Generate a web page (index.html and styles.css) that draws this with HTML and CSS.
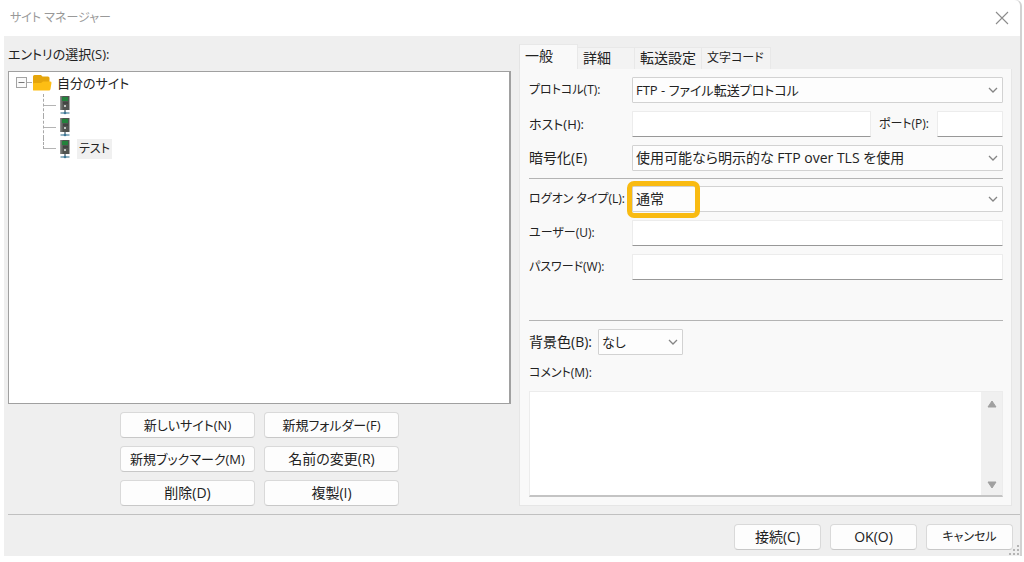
FILE: index.html
```html
<!DOCTYPE html>
<html lang="ja">
<head>
<meta charset="utf-8">
<title>サイト マネージャー</title>
<link rel="stylesheet" href="styles.css">
</head>
<body>
<svg class="defs" aria-hidden="true">
  <symbol id="chevron" viewBox="0 0 10 6"><path d="M1 1l4 4 4-4" fill="none" stroke="#858585" stroke-width="1.3"/></symbol>
  <symbol id="server" viewBox="0 0 12 20">
    <rect x="1.5" y="1" width="9" height="14" fill="#505350"/>
    <rect x="1.5" y="1" width="2" height="14" fill="#6d706d"/>
    <rect x="3" y="2" width="6" height="4" fill="#23823c"/>
    <path d="M4 8h5" stroke="#353835"/>
    <circle cx="6" cy="11" r="1" fill="#e4e8e4"/>
    <path d="M6 15v3" stroke="#667882" stroke-width="1.5"/>
    <path d="M1.5 18h9" stroke="#6e9bb0" stroke-width="1.5"/>
    <circle cx="6" cy="18" r="1.3" fill="#3d7898"/>
  </symbol>
</svg>
<div class="dialog">
  <header class="titlebar">
    <h1 class="title">サイト マネージャー</h1>
    <button class="close" aria-label="閉じる"><svg width="14" height="14" viewBox="0 0 14 14"><path d="M1 1l12 12M13 1L1 13" stroke="#8c8c8c" stroke-width="1.1"/></svg></button>
  </header>
  <main class="main">
    <section class="sites">
      <h2 class="heading" id="tree-label">エントリの選択(S):</h2>
      <div class="tree" role="tree" aria-labelledby="tree-label">
        <div class="node" role="treeitem" aria-expanded="true">
          <svg class="toggle" width="16" height="12" viewBox="0 0 16 12"><rect x=".5" y=".5" width="10" height="10" fill="#fafafa" stroke="#a3a3a3"/><path d="M2.500 5.500h6" stroke="#777"/><path d="M11 5.500h5" stroke="#aaa"/></svg>
          <svg class="folder" width="20" height="18" viewBox="0 0 20 18"><path d="M1 2.500Q1 1 2.500 1h6.500l1.500 1.500H16q1.500 0 1.500 1.500V15H1z" fill="#e5a50c"/><path d="M1 16V10q0-1 1-1h7l2-1.500h7q1.500 0 1.500 1.200L18.500 15q-.3 1.500-1.500 1.500H2q-1 0-1-.5z" fill="#fdbe14"/></svg>
          <span class="mixed">自分のサイト</span>
        </div>
        <ul class="children" role="group">
          <li class="node" role="treeitem"><svg class="server"><use href="#server"/></svg></li>
          <li class="node" role="treeitem"><svg class="server"><use href="#server"/></svg></li>
          <li class="node" role="treeitem" aria-selected="true"><svg class="server"><use href="#server"/></svg><span class="selected kana">テスト</span></li>
        </ul>
      </div>
      <div class="actions">
        <button class="btn mixed">新しいサイト(N)</button>
        <button class="btn mixed">新規フォルダー(F)</button>
        <button class="btn mixed">新規ブックマーク(M)</button>
        <button class="btn">名前の変更(R)</button>
        <button class="btn">削除(D)</button>
        <button class="btn">複製(I)</button>
      </div>
    </section>
    <section class="settings">
      <div class="tabs" role="tablist">
        <button class="tab active" role="tab" aria-selected="true">一般</button>
        <button class="tab" role="tab">詳細</button>
        <button class="tab" role="tab">転送設定</button>
        <button class="tab kana" role="tab">文字コード</button>
      </div>
      <form class="panel">
        <div class="group">
          <label class="kana" for="protocol">プロトコル(T):</label>
          <div class="select"><select class="mixed" id="protocol"><option>FTP - ファイル転送プロトコル</option></select><svg class="chevron"><use href="#chevron"/></svg></div>
          <label class="mixed" for="host">ホスト(H):</label>
          <div class="host">
            <input class="field" id="host" type="text">
            <label class="kana" for="port">ポート(P):</label>
            <input class="field port" id="port" type="text">
          </div>
          <label for="encryption">暗号化(E)</label>
          <div class="select"><select id="encryption"><option>使用可能なら明示的な FTP over TLS を使用</option></select><svg class="chevron"><use href="#chevron"/></svg></div>
        </div>
        <div class="group logon">
          <label class="kana" for="logon">ログオン タイプ(L):</label>
          <div class="select"><select id="logon"><option>通常</option></select><svg class="chevron"><use href="#chevron"/></svg><span class="highlight"></span></div>
          <label class="kana" for="user">ユーザー(U):</label>
          <input class="field" id="user" type="text">
          <label class="kana" for="password">パスワード(W):</label>
          <input class="field" id="password" type="password">
        </div>
        <div class="color">
          <label for="color">背景色(B):</label>
          <div class="select small"><select class="mixed" id="color"><option>なし</option></select><svg class="chevron"><use href="#chevron"/></svg></div>
        </div>
        <label class="comment-label kana" for="comment">コメント(M):</label>
        <div class="comment">
          <textarea id="comment"></textarea>
          <div class="scroll" aria-hidden="true">
            <svg width="10" height="8" viewBox="0 0 10 8"><path d="M5 1l4 6H1z" fill="#a0a0a0" stroke="#a0a0a0" stroke-linejoin="round"/></svg>
            <svg width="10" height="8" viewBox="0 0 10 8"><path d="M5 7l4-6H1z" fill="#a0a0a0" stroke="#a0a0a0" stroke-linejoin="round"/></svg>
          </div>
        </div>
      </form>
    </section>
  </main>
  <footer class="footer">
    <button class="btn">接続(C)</button>
    <button class="btn">OK(O)</button>
    <button class="btn kana">キャンセル</button>
    <svg class="grip" width="12" height="12" viewBox="0 0 12 12" aria-hidden="true"><path d="M9 1h2v2H9zM5 5h2v2H5zM9 5h2v2H9zM1 9h2v2H1zM5 9h2v2H5zM9 9h2v2H9z" fill="#b4b4b4"/></svg>
  </footer>
</div>
</body>
</html>
```
FILE: styles.css
```css
* { box-sizing: border-box; }

body {
  margin: 0;
  background: #fff;
  color: #222;
  font: 14px/20px "Open Sans", "Noto Sans CJK JP", sans-serif;
  font-feature-settings: "palt";
}

button, input, select, textarea {
  margin: 0;
  color: inherit;
  font: inherit;
  font-feature-settings: inherit;
}

.mixed { font-size: 13px; }
.kana { font-size: 12px; }

.defs { position: absolute; width: 0; height: 0; }

.dialog {
  margin: 0 2px 0 4px;
  border-right: 2px solid #d2d2d2;
  border-top-right-radius: 6px;
  background: #efefef;
}

.titlebar {
  display: flex;
  align-items: center;
  justify-content: space-between;
  height: 36px;
  padding: 0 11px 0 6px;
  border-top-right-radius: 6px;
  background: #fff;
}

.title { margin: 0; color: #999; font-size: 12px; font-weight: 400; }

.close { display: flex; padding: 0; border: 0; background: none; }

.main {
  display: grid;
  grid-template-columns: 503fr 493fr;
  gap: 8px;
  padding: 8px 8px 8px 4px;
}

.sites { display: flex; flex-direction: column; }

.heading { margin: 0 0 7px; font-size: 13px; font-weight: 400; }

.tree {
  flex: 1;
  padding: 0 7px;
  border: 1px solid #a0a0a0;
  border-right-width: 2px;
  background: #fff;
}

.node { display: flex; align-items: center; height: 22px; }

.folder { margin-right: 5px; }

.children {
  width: 120px;
  margin: 0 0 0 27px;
  padding: 0;
  list-style: none;
}

.children .node::before {
  content: "";
  width: 12px;
  height: 22px;
  margin-right: 3px;
  border-left: 1px dashed #a8a8a8;
  background: linear-gradient(#b4b4b4, #b4b4b4) center / 100% 1px no-repeat;
}

.children .node:last-child::before {
  height: 11px;
  align-self: flex-start;
  background-position: bottom;
}

.server { width: 12px; height: 20px; }

.selected { margin-left: 6px; padding: 0 2px; background: #f0f0f0; }

.actions {
  display: grid;
  grid-template-columns: 135px 135px;
  justify-content: center;
  gap: 8px 9px;
  margin-top: 8px;
}

.btn {
  height: 26px;
  padding: 0 4px;
  border: 1px solid #d9d9d9;
  border-bottom-color: #c8c8c8;
  border-radius: 4px;
  background: #fdfdfd;
  line-height: 20px;
}

.tabs { display: flex; align-items: flex-end; height: 25px; }

.tab {
  height: 22px;
  padding: 0 5px 2px;
  border: 1px solid #e8e8e8;
  border-width: 1px 1px 0 0;
  background: #f3f3f3;
  line-height: 18px;
  text-align: left;
  white-space: nowrap;
}

.tab:nth-child(2) { width: 57px; }
.tab:nth-child(3) { width: 67px; }
.tab:nth-child(4) { width: 69px; }

.tab.active {
  width: 59px;
  height: 25px;
  border-left: 1px solid #e4e4e4;
  background: #f9f9f9;
}

.panel {
  padding: 8px 8px 8px 9px;
  border: 1px solid #e6e6e6;
  border-top: 0;
  background: #f9f9f9;
}

.group {
  display: grid;
  grid-template-columns: 95px 1fr;
  align-items: center;
  gap: 8px;
  padding-bottom: 7px;
  border-bottom: 1px solid #b4b4b4;
}

.group > label { white-space: nowrap; }

.logon { padding: 7px 0 40px; }

.select { position: relative; display: flex; }

.select select {
  appearance: none;
  width: 100%;
  height: 26px;
  padding: 0 24px 0 3px;
  border: 1px solid #d2d2d2;
  border-radius: 1px;
  background: #fdfdfd;
}

.chevron {
  position: absolute;
  top: 10px;
  right: 5px;
  width: 10px;
  height: 6px;
  pointer-events: none;
}

.highlight {
  position: absolute;
  top: -5px;
  left: -5px;
  width: 73px;
  height: 37px;
  border: 5px solid #f9bb12;
  border-radius: 7px;
  pointer-events: none;
}

.field {
  width: 100%;
  min-width: 0;
  height: 26px;
  padding: 0 4px;
  border: 1px solid #ececec;
  border-bottom-color: #989898;
  border-radius: 1px;
  background: #fff;
}

.host { display: flex; align-items: center; gap: 8px; white-space: nowrap; }

.host .port { flex: 0 0 66px; }

.color { display: flex; align-items: center; gap: 6px; padding-top: 8px; }

.small { width: 85px; }

.comment-label { display: block; margin: 8px 0; }

.comment {
  display: flex;
  height: 106px;
  border: 1px solid #ececec;
  border-bottom: 2px solid #c4c4c4;
  background: #fff;
}

.comment textarea {
  flex: 1;
  min-width: 0;
  padding: 4px;
  border: 0;
  background: none;
  resize: none;
}

.scroll {
  display: flex;
  flex-direction: column;
  align-items: center;
  justify-content: space-between;
  width: 21px;
  padding: 8px 0 6px;
  background: #f0f0f0;
}

.footer {
  position: relative;
  display: flex;
  justify-content: flex-end;
  gap: 9px;
  margin-left: 4px;
  padding: 9px 7px 6px 0;
  border-top: 1px solid #c0c0c0;
}

.footer .btn { width: 87px; }

.grip { position: absolute; right: 0; bottom: 0; }
```
